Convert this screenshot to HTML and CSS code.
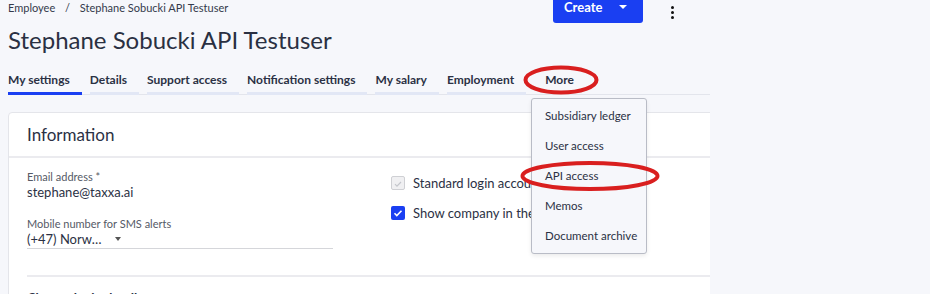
FILE: index.html
```html
<!DOCTYPE html>
<html lang="en">
<head>
<meta charset="UTF-8">
<meta name="viewport" content="width=device-width, initial-scale=1.0">
<title>Stephane Sobucki API Testuser</title>
<link rel="stylesheet" href="styles.css">
</head>
<body>

<div class="page">
    <div class="topbar">
        <div class="breadcrumb">
            <span>Employee</span>
            <span class="sep">/</span>
            <span>Stephane Sobucki API Testuser</span>
        </div>
        <button class="create">Create <span class="caret"></span></button>
        <button class="kebab"><span></span><span></span><span></span></button>
    </div>

    <h1 class="title">Stephane Sobucki API Testuser</h1>

    <div class="tabs">
        <div class="tab active">My settings</div>
        <div class="tab">Details</div>
        <div class="tab">Support access</div>
        <div class="tab">Notification settings</div>
        <div class="tab">My salary</div>
        <div class="tab">Employment</div>
        <div class="tab more">
            More
            <!-- hand drawn highlight -->
            <svg class="mark mark-more" viewBox="0 0 76 30"><ellipse cx="38" cy="15" rx="35.5" ry="12.5"/></svg>
        </div>
    </div>

    <div class="card">
        <div class="card-header">Information</div>
        <div class="card-body">
            <div class="cols">
                <div class="col-left">
                    <div class="label">Email address *</div>
                    <div class="value">stephane@taxxa.ai</div>
                    <div class="label second">Mobile number for SMS alerts</div>
                    <div class="select">(+47) Norw… <span class="small-caret"></span></div>
                </div>
                <div class="col-right">
                    <div class="check-row">
                        <span class="box disabled">
                            <svg viewBox="0 0 14 14"><path d="M3.5 7.2l2.3 2.3 4.7-4.8" fill="none" stroke="#c4c6cc" stroke-width="1.4"/></svg>
                        </span>
                        Standard login account
                    </div>
                    <div class="check-row">
                        <span class="box checked">
                            <svg viewBox="0 0 14 14"><path d="M3.5 7.2l2.3 2.3 4.7-4.8" fill="none" stroke="#fff" stroke-width="1.6"/></svg>
                        </span>
                        Show company in the company list
                    </div>
                </div>
            </div>
            <div class="divider"></div>
            <div class="section-title">Change login details</div>
        </div>
    </div>

    <div class="menu">
        <div class="menu-item">Subsidiary ledger</div>
        <div class="menu-item">User access</div>
        <div class="menu-item api">
            API access
            <svg class="mark mark-api" viewBox="0 0 140 32"><ellipse cx="70" cy="16" rx="67.5" ry="13"/></svg>
        </div>
        <div class="menu-item">Memos</div>
        <div class="menu-item">Document archive</div>
    </div>
</div>

</body>
</html>
```

FILE: styles.css
```css
body {
    margin: 0;
    background-color: #f6f7fb;
    font-family: Lato, "Noto Sans", sans-serif;
    color: #2b3144;
    overflow: hidden;
}

.page {
    position: relative;
    width: 702px;
    padding-left: 8px;
    height: 294px;
    overflow: hidden;
}

.topbar {
    display: flex;
    align-items: center;
    height: 32px;
    margin-top: -9px;
}

.breadcrumb {
    font-size: 11px;
    color: #343a4b;
    flex: 1;
}

.breadcrumb .sep {
    margin: 0 7px;
}

.create {
    display: flex;
    align-items: center;
    height: 32px;
    width: 90px;
    margin-right: 20px;
    padding: 0 0 0 11px;
    border: none;
    border-radius: 3px;
    background-color: #1a3ff2;
    color: #fff;
    font-family: Lato, sans-serif;
    font-size: 13px;
    font-weight: 700;
}

.caret {
    margin-left: 17px;
    border-left: 4px solid transparent;
    border-right: 4px solid transparent;
    border-top: 4px solid #fff;
}

.kebab {
    display: flex;
    flex-direction: column;
    gap: 2px;
    padding: 10px 8px 0 8px;
    margin-right: 28px;
    border: none;
    background: none;
}

.kebab span {
    width: 3px;
    height: 3px;
    border-radius: 50%;
    background-color: #111;
}

.title {
    margin: 2px 0 0 0;
    font-size: 24px;
    line-height: 30px;
    font-weight: 400;
    color: #2a3042;
}

.tabs {
    display: flex;
    gap: 8px;
    margin-top: 17px;
    border-bottom: 1px solid #e3e5ec;
}

.tab {
    padding: 0 12px 4px 0;
    font-size: 12px;
    font-weight: 700;
    line-height: 16px;
    white-space: nowrap;
    border-bottom: 3px solid #e2e7f5;
    margin-bottom: -1px;
}

.tab.active {
    border-bottom-color: #1a3ff2;
}

.tab.more {
    position: relative;
    margin-left: 11px;
    border-bottom-color: transparent;
}

.card {
    margin-top: 17px;
    width: 720px;
    background-color: #fff;
    border: 1px solid #e4e5ea;
    border-radius: 4px;
}

.card-header {
    height: 43px;
    line-height: 43px;
    padding: 0 18px;
    font-size: 17px;
    border-bottom: 2px solid #ebebef;
}

.card-body {
    padding: 12px 0 0 18px;
}

.cols {
    display: flex;
}

.col-left {
    width: 306px;
}

.label {
    font-size: 11px;
    line-height: 14px;
    color: #555a66;
}

.label.second {
    margin-top: 17px;
}

.value {
    font-size: 13px;
    line-height: 16px;
}

.select {
    display: flex;
    align-items: center;
    font-size: 13px;
    line-height: 16px;
    padding-bottom: 1px;
    border-bottom: 1px solid #d5d6da;
}

.small-caret {
    margin-left: 14px;
    border-left: 3.5px solid transparent;
    border-right: 3.5px solid transparent;
    border-top: 4px solid #555;
}

.col-right {
    margin-left: 58px;
    padding-top: 6px;
}

.check-row {
    display: flex;
    align-items: center;
    gap: 8px;
    height: 14px;
    margin-bottom: 16px;
    font-size: 13px;
    white-space: nowrap;
}

.box {
    width: 14px;
    height: 14px;
    box-sizing: border-box;
    border-radius: 2px;
    display: flex;
}

.box svg {
    width: 14px;
    height: 14px;
}

.box.disabled {
    border: 1px solid #cfd0d4;
    background-color: #f0f0f2;
}

.box.checked {
    background-color: #1a3ff2;
}

.divider {
    margin-top: 26px;
    border-top: 2px solid #ebebef;
}

.section-title {
    margin-top: 13px;
    font-size: 13px;
    font-weight: 700;
}

.menu {
    position: absolute;
    left: 531px;
    top: 98px;
    width: 116px;
    height: 156px;
    box-sizing: border-box;
    padding-top: 2px;
    background-color: #f6f7fb;
    border: 1px solid #b9bcc6;
    border-radius: 3px;
    box-shadow: 0 2px 4px rgba(0, 0, 0, 0.08);
}

.menu-item {
    height: 30px;
    line-height: 30px;
    padding-left: 13px;
    font-size: 11.5px;
    white-space: nowrap;
    color: #2b3144;
}

.menu-item.api {
    position: relative;
}

.mark {
    position: absolute;
    fill: none;
    stroke: #d91f1f;
    stroke-width: 4px;
}

.mark-more {
    left: -22px;
    top: -7px;
    width: 76px;
    height: 30px;
}

.mark-api {
    left: -12px;
    top: -1px;
    width: 140px;
    height: 32px;
}
```
